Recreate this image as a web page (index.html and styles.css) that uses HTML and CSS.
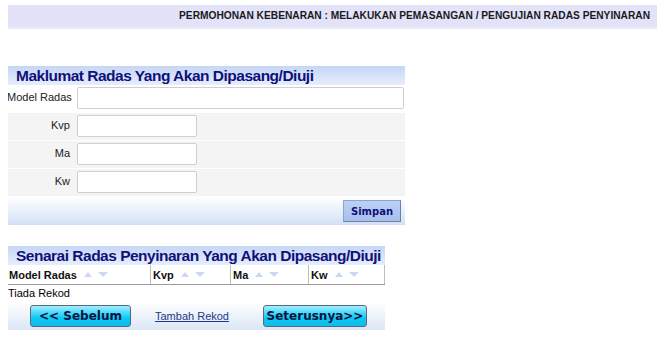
FILE: index.html
```html
<!DOCTYPE html>
<html lang="ms">

<head>
    <meta charset="utf-8">
    <title>Permohonan Kebenaran</title>
    <link rel="stylesheet" href="styles.css">
</head>

<body>

    <div class="tajuk">PERMOHONAN KEBENARAN : MELAKUKAN PEMASANGAN / PENGUJIAN RADAS PENYINARAN</div>

    <section class="borang">
        <h2>Maklumat Radas Yang Akan Dipasang/Diuji</h2>
        <div class="baris">
            <label>Model Radas</label>
            <input type="text" class="panjang">
        </div>
        <div class="baris">
            <label>Kvp</label>
            <input type="text" class="pendek">
        </div>
        <div class="baris">
            <label>Ma</label>
            <input type="text" class="pendek">
        </div>
        <div class="baris">
            <label>Kw</label>
            <input type="text" class="pendek">
        </div>
        <div class="kaki">
            <button class="simpan">Simpan</button>
        </div>
    </section>

    <section class="senarai">
        <h2>Senarai Radas Penyinaran Yang Akan Dipasang/Diuji</h2>
        <div class="kepala">
            <div class="lajur">Model Radas
                <svg class="susun" width="28" height="7" viewBox="0 0 28 7"><path d="M1 6 L5 1 L9 6 Z"/><path d="M15 1 L25 1 L20 6 Z"/></svg>
            </div>
            <div class="lajur">Kvp
                <svg class="susun" width="28" height="7" viewBox="0 0 28 7"><path d="M1 6 L5 1 L9 6 Z"/><path d="M15 1 L25 1 L20 6 Z"/></svg>
            </div>
            <div class="lajur">Ma
                <svg class="susun" width="28" height="7" viewBox="0 0 28 7"><path d="M1 6 L5 1 L9 6 Z"/><path d="M15 1 L25 1 L20 6 Z"/></svg>
            </div>
            <div class="lajur">Kw
                <svg class="susun" width="28" height="7" viewBox="0 0 28 7"><path d="M1 6 L5 1 L9 6 Z"/><path d="M15 1 L25 1 L20 6 Z"/></svg>
            </div>
        </div>
        <div class="kosong">Tiada Rekod</div>
        <div class="navigasi">
            <button class="nav sebelum">&lt;&lt; Sebelum</button>
            <a href="#">Tambah Rekod</a>
            <button class="nav seterus">Seterusnya&gt;&gt;</button>
        </div>
    </section>

</body></html>
```

FILE: styles.css
```css
body {
    margin: 5px 8px;
    font-family: "Liberation Sans", Arial, sans-serif;
    font-size: 11px;
    background-color: #ffffff;
    color: #000000;
}

.tajuk {
    background-color: #e2e2f9;
    border-bottom: 2px solid #ebebf7;
    height: 22px;
    line-height: 22px;
    text-align: right;
    padding-right: 7px;
    font-weight: bold;
    font-size: 10.2px;
    color: #1a1a1a;
    white-space: nowrap;
}

h2 {
    margin: 0;
    height: 19px;
    line-height: 19px;
    padding-left: 9px;
    font-size: 15.5px;
    letter-spacing: -0.5px;
    font-weight: bold;
    color: #10107a;
    white-space: nowrap;
    background: linear-gradient(#c6d6f6, #e6eefc);
}

.borang {
    width: 398px;
    margin: 37px 0 0 -1px;
}

.baris {
    display: flex;
    align-items: flex-start;
    height: 25px;
    padding-top: 2px;
    border-bottom: 1px solid #ffffff;
    background-color: #f4f4f4;
}

.baris:first-of-type {
    background-color: #ffffff;
}

.baris label {
    width: 63px;
    padding-top: 4px;
    text-align: right;
    white-space: nowrap;
    font-size: 11px;
    color: #222222;
}

.baris input {
    box-sizing: border-box;
    margin-left: 7px;
    height: 22px;
    padding: 0;
    border: 1px solid #cfcfcf;
    border-radius: 2px;
    background-color: #ffffff;
}

.panjang {
    width: 327px;
}

.pendek {
    width: 120px;
}

.kaki {
    height: 28px;
    display: flex;
    justify-content: flex-end;
    align-items: center;
    padding-right: 4px;
    background: linear-gradient(#ffffff, #d2e0f6);
}

.simpan {
    width: 58px;
    height: 22px;
    border: 1px solid #8aa4d2;
    border-right-color: #6c7fa4;
    border-bottom-color: #6c7fa4;
    background: linear-gradient(#bcd0f4, #a9c0ec);
    color: #10107a;
    font-family: "DejaVu Sans", Tahoma, sans-serif;
    font-size: 10px;
    font-weight: bold;
    cursor: pointer;
}

.senarai {
    width: 378px;
    margin: 21px 0 0 -1px;
}

.kepala {
    display: grid;
    grid-template-columns: 143px 80px 78px 1fr;
    height: 19px;
    border-bottom: 1px solid #9a9a9a;
    background-color: #ffffff;
}

.lajur {
    display: flex;
    align-items: center;
    gap: 6px;
    border-left: 1px solid #bdbdbd;
    padding-left: 2px;
    font-weight: bold;
    font-size: 11px;
    color: #111111;
    white-space: nowrap;
}

.lajur:first-child {
    border-left: none;
}

.lajur:last-child {
    border-right: 1px solid #bdbdbd;
}

.susun {
    fill: #cbd8f0;
}

.kosong {
    height: 17px;
    line-height: 17px;
    padding-left: 1px;
    font-size: 11px;
}

.navigasi {
    height: 28px;
    display: flex;
    align-items: center;
    padding-left: 23px;
    background: linear-gradient(#ffffff, #dbe6f6);
}

.navigasi a {
    margin: 0 34px 0 24px;
    font-size: 11px;
    color: #1a3a8a;
}

.nav {
    height: 22px;
    padding: 0;
    border: 1px solid #5a6a7a;
    border-radius: 3px;
    background: linear-gradient(#a2efff, #0cc8f6 60%, #10bde8);
    font-family: "DejaVu Sans", Verdana, sans-serif;
    font-size: 12px;
    font-weight: bold;
    color: #0b1440;
    cursor: pointer;
}

.sebelum {
    width: 101px;
}

.seterus {
    width: 104px;
}
```
